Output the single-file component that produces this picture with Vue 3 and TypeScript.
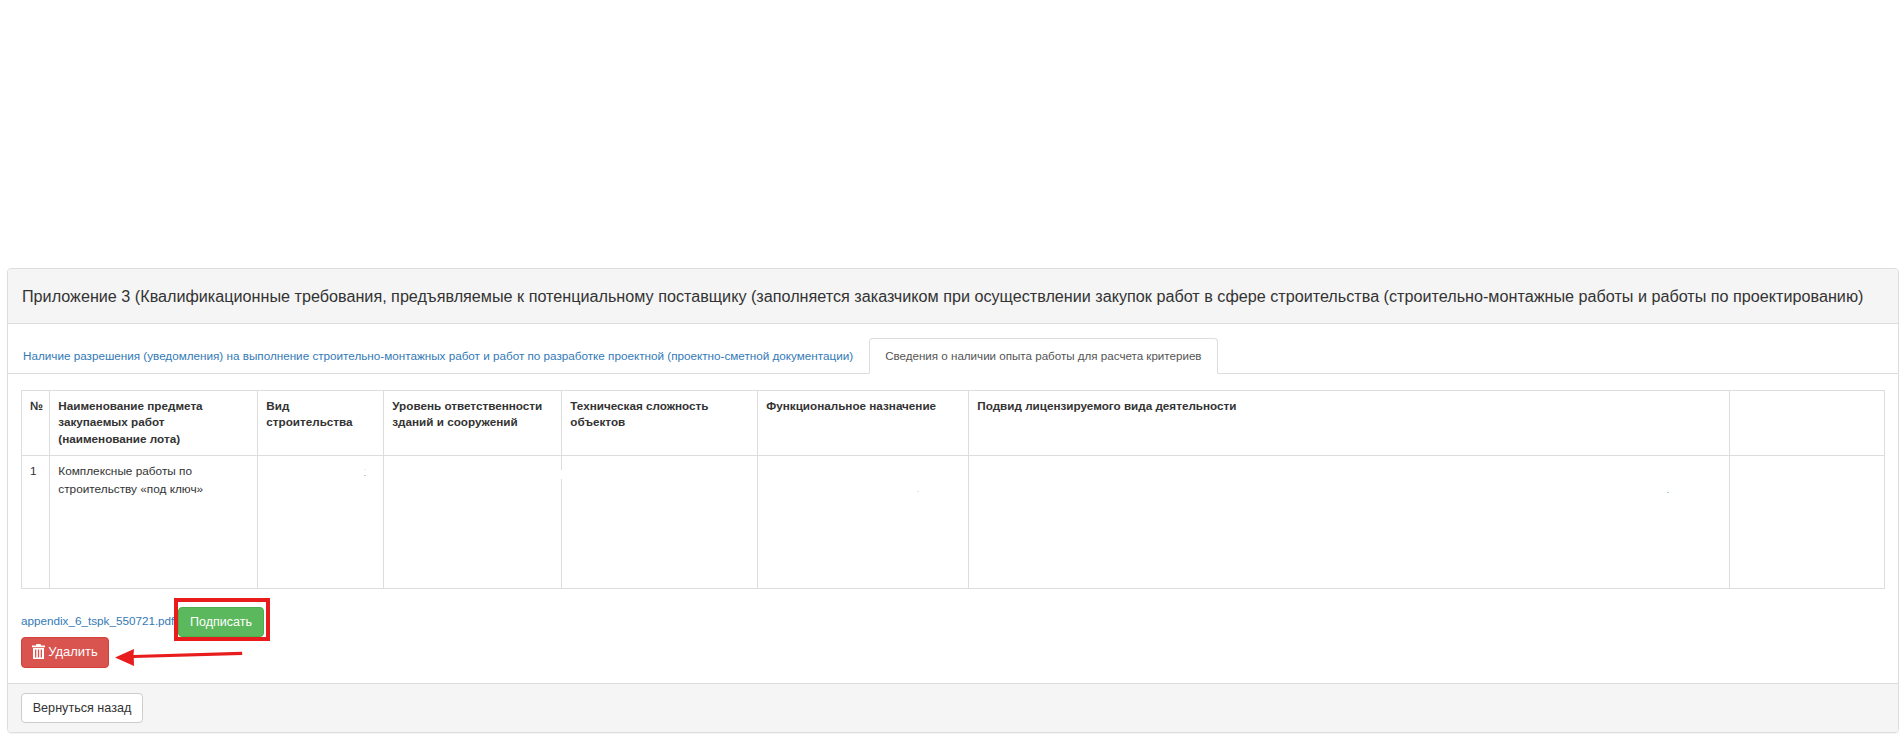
<script setup lang="ts">
const title = 'Приложение 3 (Квалификационные требования, предъявляемые к потенциальному поставщику (заполняется заказчиком при осуществлении закупок работ в сфере строительства (строительно-монтажные работы и работы по проектированию)'
const columns: { label: string; width: string }[] = [
  { label: '№', width: '28.3px' },
  { label: 'Наименование предмета закупаемых работ (наименование лота)', width: '208px' },
  { label: 'Вид строительства', width: '126px' },
  { label: 'Уровень ответственности зданий и сооружений', width: '178px' },
  { label: 'Техническая сложность объектов', width: '196px' },
  { label: 'Функциональное назначение', width: '211px' },
  { label: 'Подвид лицензируемого вида деятельности', width: '761px' },
  { label: '', width: 'auto' }
]
</script>

<template>
  <div class="page">
    <section class="panel">
      <header class="panel-heading">{{ title }}</header>
      <div class="panel-body">
        <ul class="tabs">
          <li class="tab"><a href="#" @click.prevent>Наличие разрешения (уведомления) на выполнение строительно-монтажных работ и работ по разработке проектной (проектно-сметной документации)</a></li>
          <li class="tab active"><a href="#" @click.prevent>Сведения о наличии опыта работы для расчета критериев</a></li>
        </ul>
        <div class="content">
          <table class="grid">
            <colgroup>
              <col v-for="c in columns" :key="c.label" :style="{ width: c.width }" />
            </colgroup>
            <thead>
              <tr>
                <th v-for="c in columns" :key="c.label">{{ c.label }}</th>
              </tr>
            </thead>
            <tbody>
              <tr>
                <td>1</td>
                <td>Комплексные работы по строительству «под ключ»</td>
                <td class="host"><i class="speck s1"></i><i class="speck s2"></i></td>
                <td></td>
                <td class="host"><i class="gap"></i></td>
                <td class="host"><i class="speck s3"></i></td>
                <td class="host"><i class="speck s4"></i></td>
                <td></td>
              </tr>
            </tbody>
          </table>
          <div class="file-row">
            <a class="file" href="#" @click.prevent>appendix_6_tspk_550721.pdf</a>
            <button class="btn green" type="button">Подписать</button>
            <span class="highlight"></span>
          </div>
          <div class="delete-row">
            <button class="btn red" type="button">
              <svg class="trash" viewBox="0 0 13 15" width="13" height="15" aria-hidden="true">
                <path fill="#fff" fill-rule="evenodd" d="M4.5 0h4l.6 1.6H13V3.2H0V1.6h3.9zM1 4h11v11H1zM3 5.4v8.2h1.3V5.4zM5.85 5.4v8.2h1.3V5.4zM8.7 5.4v8.2H10V5.4z"/>
              </svg>
              Удалить
            </button>
            <svg class="arrow" viewBox="0 0 130 24" width="130" height="24" aria-hidden="true">
              <path fill="#e81c1c" d="M0 13.5 L19 5 L18.5 10.9 L127 7.7 L127.3 10.9 L18.8 14 L19 22 Z"/>
            </svg>
          </div>
        </div>
      </div>
      <footer class="panel-footer">
        <button class="btn plain" type="button">Вернуться назад</button>
      </footer>
    </section>
  </div>
</template>

<style>
html, body { margin: 0; background: #fff; }
</style>

<style scoped>
.page {
  height: 740px;
  box-sizing: border-box;
  padding: 268px 3px 0 7px;
  font-family: "Liberation Sans", Arial, sans-serif;
  color: #333;
  overflow: hidden;
}
.panel {
  height: 465px;
  box-sizing: border-box;
  border: 1px solid #ddd;
  border-radius: 4px;
  box-shadow: 0 1px 1px rgba(0, 0, 0, .05);
  display: flex;
  flex-direction: column;
}
.panel-heading {
  height: 55px;
  flex: none;
  box-sizing: border-box;
  background: #f5f5f5;
  border-bottom: 1px solid #ddd;
  border-radius: 3px 3px 0 0;
  padding: 0 14px;
  font-size: 16.18px;
  line-height: 54px;
  white-space: nowrap;
}
.panel-body { flex: 1; min-height: 0; }
.tabs {
  list-style: none;
  margin: 0;
  padding: 14px 0 0;
  display: flex;
  align-items: flex-end;
  height: 50px;
  box-sizing: border-box;
  border-bottom: 1px solid #ddd;
}
.tab { margin-bottom: -1px; }
.tab a {
  display: block;
  height: 36px;
  box-sizing: border-box;
  padding: 0 15px;
  line-height: 34px;
  font-size: 11.7px;
  color: #337ab7;
  text-decoration: none;
  border: 1px solid transparent;
  border-radius: 4px 4px 0 0;
  white-space: nowrap;
}
.tab:first-child a { border-left: 0; }
.tab.active a {
  font-size: 11.6px;
  color: #555;
  background: #fff;
  border-color: #ddd #ddd #fff;
}
.content { padding: 16px 13px 0 13px; }
.grid {
  width: 100%;
  table-layout: fixed;
  border-collapse: collapse;
  font-size: 11.7px;
}
.grid th, .grid td {
  border: 1px solid #ddd;
  text-align: left;
  vertical-align: top;
  box-sizing: border-box;
}
.grid th {
  height: 65px;
  padding: 7px 8px 3px;
  line-height: 16.4px;
  font-weight: 700;
  color: #333;
}
.grid td {
  height: 133px;
  padding: 6px 8px;
  line-height: 18px;
  font-size: 11.8px;
}
.host { position: relative; }
.speck {
  position: absolute;
  width: 2px;
  height: 1px;
  background: #ccc;
}
.s1 { left: 106px; top: 13px; background: #eee; }
.s2 { left: 106px; top: 19px; }
.s3 { left: 159px; top: 35px; background: #e4e4e4; }
.s4 { left: 698px; top: 36px; background: #a6d2f0; }
.gap {
  position: absolute;
  left: -1px;
  top: 14px;
  width: 2px;
  height: 9px;
  background: #fff;
}
.file-row {
  position: relative;
  display: flex;
  align-items: center;
  height: 30px;
  margin-top: 18px;
}
.file {
  width: 153px;
  flex: none;
  overflow: hidden;
  margin-bottom: 3px;
  font-size: 11.7px;
  color: #337ab7;
  text-decoration: none;
  white-space: nowrap;
}
.btn {
  font-family: inherit;
  box-sizing: border-box;
  border: 1px solid transparent;
  border-radius: 4px;
  padding: 0;
  display: inline-flex;
  align-items: center;
  justify-content: center;
}
.green {
  position: relative;
  width: 86px;
  height: 30px;
  margin-left: 4px;
  font-size: 12.5px;
  background: #5cb85c;
  border-color: #4cae4c;
  color: #fff;
}
.highlight {
  position: absolute;
  left: 153px;
  top: -9px;
  width: 96px;
  height: 43px;
  box-sizing: border-box;
  border: 4px solid #e81c1c;
}
.delete-row {
  display: flex;
  align-items: center;
  height: 31px;
}
.red {
  width: 88px;
  height: 31px;
  gap: 3px;
  padding-bottom: 2px;
  font-size: 13px;
  background: #d9534f;
  border-color: #d43f3a;
  color: #fff;
}
.arrow { margin: 7px 0 0 6px; }
.panel-footer {
  flex: none;
  height: 49px;
  box-sizing: border-box;
  background: #f5f5f5;
  border-top: 1px solid #ddd;
  border-radius: 0 0 3px 3px;
  padding: 9px 13px 0;
}
.plain {
  width: 122px;
  height: 30px;
  padding-bottom: 1px;
  font-size: 12.6px;
  background: #fff;
  border-color: #ccc;
  color: #333;
}
</style>
